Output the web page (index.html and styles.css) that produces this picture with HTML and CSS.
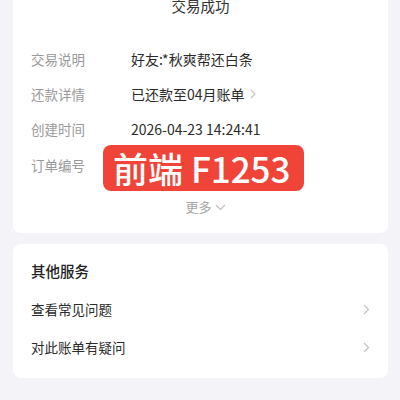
FILE: index.html
```html
<!DOCTYPE html>
<html lang="zh-CN">

<head>
	<meta charset="UTF-8">
	<meta name="viewport" content="width=device-width, initial-scale=1.0">
	<title>交易详情</title>
	<link rel="stylesheet" href="styles.css">
</head>

<body>
	<div class="card detail">
		<h2 class="status">交易成功</h2>
		<div class="rows">
			<div class="row">
				<span class="label">交易说明</span>
				<span class="value">好友:*秋爽帮还白条</span>
			</div>
			<div class="row">
				<span class="label">还款详情</span>
				<span class="value">已还款至04月账单
					<svg class="arrow-sm" width="6" height="10" viewBox="0 0 6 10"><path d="M1 1l4 4-4 4" fill="none" stroke="#c4c4c4" stroke-width="1.2"/></svg>
				</span>
			</div>
			<div class="row">
				<span class="label">创建时间</span>
				<span class="value">2026-04-23 14:24:41</span>
			</div>
			<div class="row">
				<span class="label">订单编号</span>
				<span class="value"></span>
				<div class="stamp">前端 F1253</div>
			</div>
		</div>
		<div class="more">更多
			<svg width="11" height="7" viewBox="0 0 11 7"><path d="M1 1l4.5 4.5L10 1" fill="none" stroke="#bdbdbd" stroke-width="1.1"/></svg>
		</div>
	</div>

	<div class="card services">
		<h3>其他服务</h3>
		<a class="link" href="#">查看常见问题
			<svg width="7" height="11" viewBox="0 0 7 11"><path d="M1 1l4.5 4.5L1 10" fill="none" stroke="#c4c4c4" stroke-width="1.2"/></svg>
		</a>
		<a class="link" href="#">对此账单有疑问
			<svg width="7" height="11" viewBox="0 0 7 11"><path d="M1 1l4.5 4.5L1 10" fill="none" stroke="#c4c4c4" stroke-width="1.2"/></svg>
		</a>
	</div>
</body>

</html>
```

FILE: styles.css
```css
* {
	margin: 0;
	padding: 0;
	box-sizing: border-box;
}

body {
	background: #f4f4f8;
	font-family: "Noto Sans CJK SC", "Noto Sans", sans-serif;
	color: #333;
	overflow: hidden;
}

.card {
	background: #fff;
	border-radius: 8px;
	margin: 0 12px 0 13px;
}

.detail {
	margin-top: -20px;
	padding: 16px 18px 16px;
}

.status {
	text-align: center;
	font-size: 14.5px;
	font-weight: 400;
	line-height: 20px;
	color: #333;
}

.rows {
	margin-top: 25.5px;
}

.row {
	position: relative;
	display: flex;
	align-items: center;
	height: 35.2px;
}

.label {
	width: 100px;
	font-size: 13.5px;
	color: #9a9a9a;
}

.value {
	display: flex;
	align-items: center;
	gap: 5px;
	font-size: 14px;
	color: #2b2b2b;
}

.stamp {
	position: absolute;
	left: 72px;
	top: -2px;
	width: 201px;
	height: 46px;
	border-radius: 8px;
	background: #f04438;
	color: #fff;
	font-size: 35px;
	font-weight: 500;
	line-height: 46px;
	padding-left: 10px;
	white-space: nowrap;
}

.more {
	display: flex;
	align-items: center;
	justify-content: center;
	gap: 3px;
	margin-top: 15px;
	line-height: 20px;
	font-size: 13px;
	color: #a6a6a6;
	padding-left: 10px;
}

.services {
	margin-top: 11px;
	padding: 17px 18px 12px;
}

.services h3 {
	font-size: 14.5px;
	font-weight: 500;
	line-height: 20px;
	color: #222;
	margin-bottom: 9px;
}

.link {
	display: flex;
	align-items: center;
	justify-content: space-between;
	height: 38px;
	font-size: 13.5px;
	color: #2b2b2b;
	text-decoration: none;
}
```
